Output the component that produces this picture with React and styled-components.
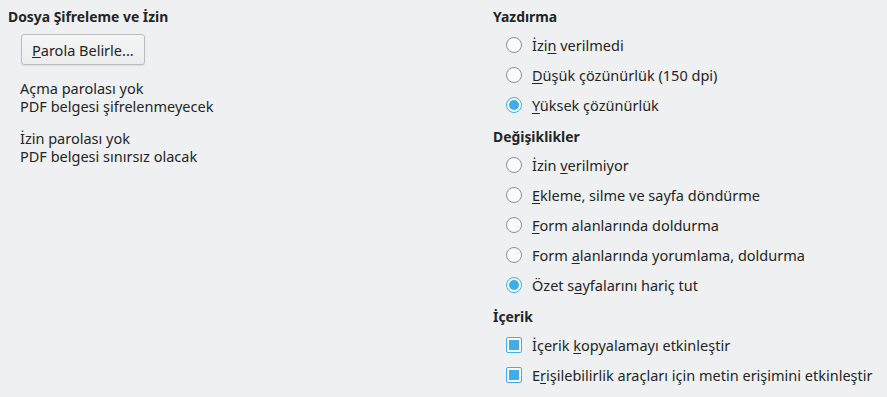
import React from 'react';
import styled, { createGlobalStyle } from 'styled-components';

const GlobalStyle = createGlobalStyle`
  html, body {
    margin: 0;
    padding: 0;
    background: #eff0f1;
  }
  body {
    font-family: "Noto Sans", "Open Sans", sans-serif;
    font-size: 14.5px;
    color: #232627;
  }
`;

const Page = styled.div`
  display: grid;
  grid-template-columns: 485px 1fr;
  width: 887px;
  height: 397px;
  box-sizing: border-box;
  padding: 8px 0 0 8px;
  overflow: hidden;
`;

const Column = styled.div`
  display: flex;
  flex-direction: column;
`;

const Heading = styled.div`
  font-weight: bold;
  font-size: 13.9px;
  line-height: 18px;
  margin-top: ${p => p.$top || 0}px;
`;

const Button = styled.button`
  align-self: flex-start;
  margin: 8px 0 0 13px;
  height: 31px;
  padding: 0 10px;
  font-family: inherit;
  font-size: 14.5px;
  color: #232627;
  background: linear-gradient(#f4f5f5, #eceded);
  border: 1px solid #b9bbbd;
  border-radius: 3px;
  box-shadow: 0 1px 1px rgba(0, 0, 0, 0.08);
`;

const Info = styled.div`
  margin: ${p => p.$top}px 0 0 12px;
  line-height: 18px;
`;

const Options = styled.div`
  display: flex;
  flex-direction: column;
  margin: 4px 0 0 13px;
`;

const Option = styled.div`
  display: flex;
  align-items: center;
  height: 30px;
  gap: 10px;
`;

const Radio = styled.span`
  width: 16px;
  height: 16px;
  box-sizing: border-box;
  border-radius: 50%;
  border: 1px solid ${p => (p.$on ? '#3daee9' : '#8d8f91')};
  background: #fcfcfc;
  display: flex;
  align-items: center;
  justify-content: center;
  &::after {
    content: '';
    width: 10px;
    height: 10px;
    border-radius: 50%;
    background: ${p => (p.$on ? '#3daee9' : 'transparent')};
  }
`;

const Check = styled.span`
  width: 16px;
  height: 16px;
  box-sizing: border-box;
  border-radius: 2px;
  border: 1px solid #3daee9;
  background: #fcfcfc;
  display: flex;
  align-items: center;
  justify-content: center;
  &::after {
    content: '';
    width: 10px;
    height: 10px;
    background: #3daee9;
  }
`;

const Label = styled.span`
  white-space: nowrap;
  u {
    text-decoration: underline;
    text-underline-offset: 2px;
  }
`;

const Choice = ({ type = 'radio', on, children }) => (
  <Option>
    {type === 'radio' ? <Radio $on={on} /> : <Check />}
    <Label>{children}</Label>
  </Option>
);

export default function App() {
  return (
    <>
      <GlobalStyle />
      <Page>
        <Column>
          <Heading>Dosya Şifreleme ve İzin</Heading>
          <Button><u>P</u>arola Belirle...</Button>
          <Info $top={14}>
            Açma parolası yok<br />PDF belgesi şifrelenmeyecek
          </Info>
          <Info $top={14}>
            İzin parolası yok<br />PDF belgesi sınırsız olacak
          </Info>
        </Column>
        <Column>
          <Heading>Yazdırma</Heading>
          <Options>
            <Choice>İzi<u>n</u> verilmedi</Choice>
            <Choice><u>D</u>üşük çözünürlük (150 dpi)</Choice>
            <Choice on><u>Y</u>üksek çözünürlük</Choice>
          </Options>
          <Heading $top={8}>Değişiklikler</Heading>
          <Options>
            <Choice>İzin <u>v</u>erilmiyor</Choice>
            <Choice><u>E</u>kleme, silme ve sayfa döndürme</Choice>
            <Choice><u>F</u>orm alanlarında doldurma</Choice>
            <Choice>Form <u>a</u>lanlarında yorumlama, doldurma</Choice>
            <Choice on>Özet s<u>a</u>yfalarını hariç tut</Choice>
          </Options>
          <Heading $top={8}>İçerik</Heading>
          <Options>
            <Choice type="check">İçerik <u>k</u>opyalamayı etkinleştir</Choice>
            <Choice type="check">E<u>r</u>işilebilirlik araçları için metin erişimini etkinleştir</Choice>
          </Options>
        </Column>
      </Page>
    </>
  );
}
